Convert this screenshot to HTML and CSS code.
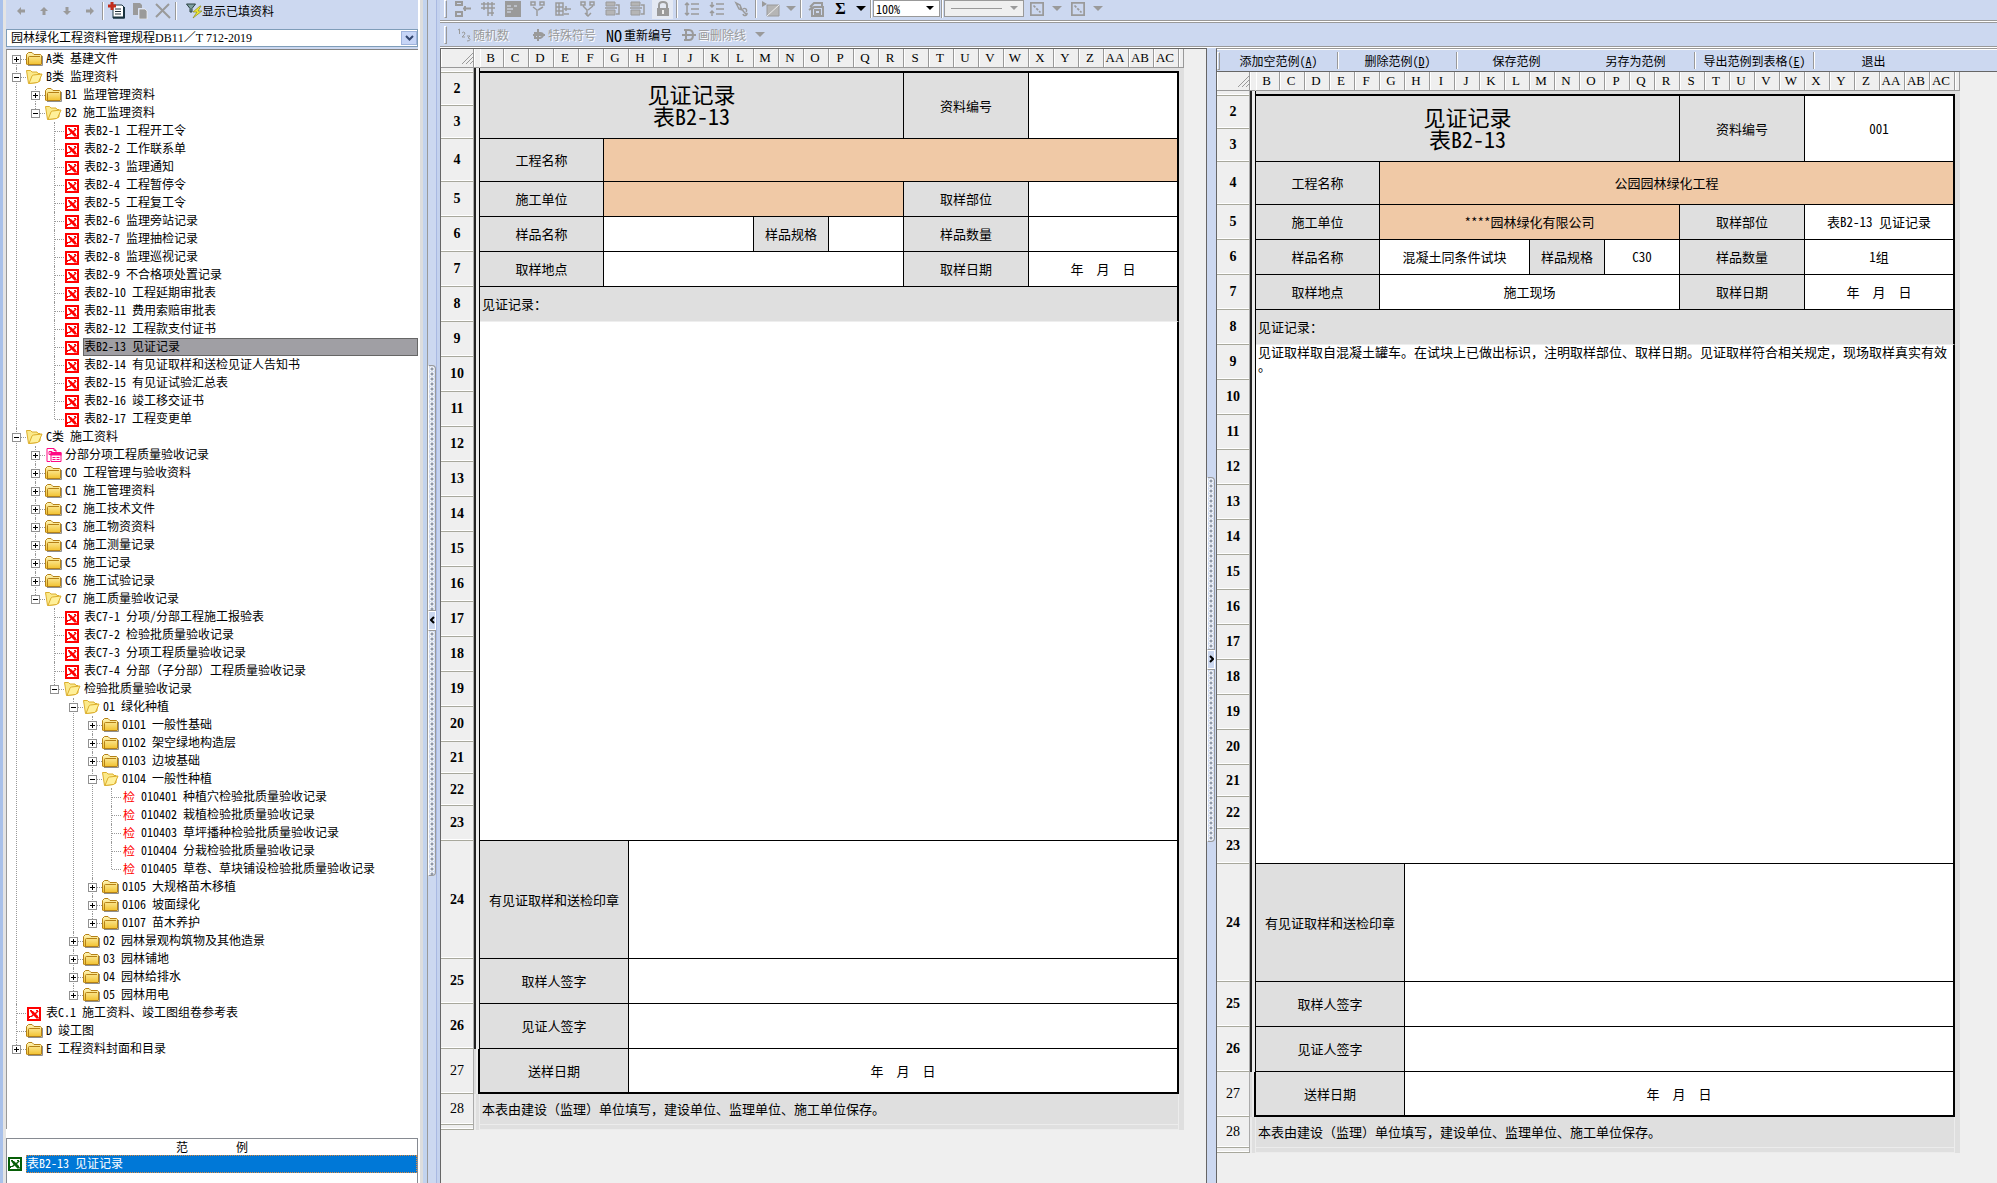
FILE: index.html
```html
<!DOCTYPE html>
<html lang="zh-CN">
<head>
<meta charset="utf-8">
<title>园林绿化工程资料管理</title>
<link rel="stylesheet" href="styles.css">
</head>
<body>
<svg class="defs" width="0" height="0" aria-hidden="true">
  <defs>
    <linearGradient id="g" x1="0" y1="0" x2="0" y2="1"><stop offset="0" stop-color="#fff6b8"/><stop offset="1" stop-color="#f2c230"/></linearGradient>
    <symbol id="fc" viewBox="0 0 17 16"><path d="M2 14.5h14.5V5" fill="none" stroke="#8f8f8f"/><path d="M.5 13V3.5L2.5 1.5H6L8 3.5h6.500l1 1V13q0 .5-.5.5H1.500q-1 0-1-.5z" fill="url(#g)" stroke="#b58116"/><path d="M2.500 13V6.500q0-1 1-1H14" fill="none" stroke="#b58116"/></symbol>
    <symbol id="fo" viewBox="0 0 17 16"><path d="M.5 1.500h4l1.500 1.500h5l1 1.500h2V12l-3 1.500-8.500 1z" fill="#fbe98a" stroke="#dcae2c"/><path d="M3 14.500l3-7.500q.5-1 1.500-1l8.500-1-3 7q-.5 1-1.500 1.500z" fill="#fff09a" stroke="#dcae2c"/></symbol>
    <symbol id="x" viewBox="0 0 14 14"><path d="M0 0h14v14H0z" fill="currentColor"/><path d="M2 2h10v10H2z" fill="#fff"/><path d="M3 4h3l2 2 2-2h2L9 7l2 2v2H9L6.500 8.500 5 10H3v1H2V9h2l1.500-1.500z" fill="currentColor"/><path d="M9 11h3v-1M3 3.500h2M9 3.500h2" stroke="currentColor" fill="none"/></symbol>
    <symbol id="bk" viewBox="0 0 16 16"><path d="M4.500 14.500h-3V1.500h7l2 2V5M8.500 1.500v2h2M3.500 4.500h3v3h-3zM5.500 5.500h10v9h-10z" fill="none" stroke="#ff0a84"/><path d="M5 5.500h11v3H5z" fill="#ff0a84"/><path d="M7 10.500h3M11 10.500h3M7 12.500h3M11 12.500h3" fill="none" stroke="#ff0a84"/></symbol>
    <symbol id="ar" viewBox="0 0 10 10"><path d="M1 5l4-4v2.500h4v3H5V9z" fill="#9a9a9a"/></symbol>
    <symbol id="dn" viewBox="0 0 10 6"><path d="M0 0h10L5 5z" fill="currentColor"/></symbol>
    <symbol id="corner" viewBox="0 0 12 12"><path d="M1 12L12 1M5 12l7-7M9 12l3-3" stroke="#999" fill="none"/></symbol>
    <symbol id="hatch" viewBox="0 0 16 16"><rect x="1" y="1" width="14" height="14" fill="none" stroke="#9a9a9a" stroke-width="2"/><path d="M4 4l8 8" stroke="#9a9a9a" stroke-width="2" stroke-dasharray="3 1.500"/></symbol>
  </defs>
</svg>
<div class="app">
  <aside class="side">
    <div class="tools">
      <button class="tb" aria-label="后退"><svg width="10" height="10"><use href="#ar"/></svg></button>
      <button class="tb" aria-label="上移"><svg class="up" width="10" height="10"><use href="#ar"/></svg></button>
      <button class="tb" aria-label="下移"><svg class="down" width="10" height="10"><use href="#ar"/></svg></button>
      <button class="tb" aria-label="前进"><svg class="right" width="10" height="10"><use href="#ar"/></svg></button>
      <i class="sep"></i>
      <button class="tb" aria-label="新建"><svg width="17" height="17" viewBox="0 0 17 17"><path d="M5 3h9l2 2v11H5z" fill="#fff" stroke="#243c48"/><path d="M5 15.500h11V5" fill="none" stroke="#18323e" stroke-width="2"/><path d="M7 7h6M7 9.500h6M7 12h6" stroke="#20303a"/><path d="M4 0v8M0 4h8" stroke="#c22c1c" stroke-width="3"/></svg></button>
      <button class="tb" aria-label="复制"><svg width="16" height="16" viewBox="0 0 16 16"><path d="M1 0h7l2 2v3H6v7H1z" fill="#9a9a9a"/><path d="M7 6h6l2 2v8H7z" fill="#9a9a9a" stroke="#fff" stroke-width=".6"/></svg></button>
      <button class="tb" aria-label="删除"><svg width="16" height="16" viewBox="0 0 16 16"><path d="M1 1l14 14M14 1L1 14" stroke="#9a9a9a" stroke-width="2"/></svg></button>
      <i class="sep"></i>
      <button class="filter"><svg width="16" height="16" viewBox="0 0 16 16"><path d="M.5 1h9L6 5.500V9H4V5.500z" fill="#7fa0a0" stroke="#2b4040"/><path d="M14 3L7 9h4l-4 6 9-7h-4l3-5z" fill="#f2ea30" stroke="#8a8a20" stroke-width=".7"/></svg>显示已填资料</button>
    </div>
    <div class="picker">
      <select aria-label="规程"><option>园林绿化工程资料管理规程DB11／T 712-2019</option></select>
      <span class="drop"><svg width="9" height="7" viewBox="0 0 9 7"><path d="M1 1l3.500 3.500L8 1" fill="none" stroke="#33466e" stroke-width="2"/></svg></span>
    </div>
    <ul class="tree">
      <li><div><button class="pm p"></button><svg class="ic"><use href="#fc"/></svg><span>A类 基建文件</span></div></li>
      <li><div><button class="pm"></button><svg class="ic"><use href="#fo"/></svg><span>B类 监理资料</span></div>
        <ul>
          <li><div><button class="pm p"></button><svg class="ic"><use href="#fc"/></svg><span>B1 监理管理资料</span></div></li>
          <li><div><button class="pm"></button><svg class="ic"><use href="#fo"/></svg><span>B2 施工监理资料</span></div>
            <ul>
              <li><div><svg class="xi"><use href="#x"/></svg><span>表B2-1 工程开工令</span></div></li>
              <li><div><svg class="xi"><use href="#x"/></svg><span>表B2-2 工作联系单</span></div></li>
              <li><div><svg class="xi"><use href="#x"/></svg><span>表B2-3 监理通知</span></div></li>
              <li><div><svg class="xi"><use href="#x"/></svg><span>表B2-4 工程暂停令</span></div></li>
              <li><div><svg class="xi"><use href="#x"/></svg><span>表B2-5 工程复工令</span></div></li>
              <li><div><svg class="xi"><use href="#x"/></svg><span>表B2-6 监理旁站记录</span></div></li>
              <li><div><svg class="xi"><use href="#x"/></svg><span>表B2-7 监理抽检记录</span></div></li>
              <li><div><svg class="xi"><use href="#x"/></svg><span>表B2-8 监理巡视记录</span></div></li>
              <li><div><svg class="xi"><use href="#x"/></svg><span>表B2-9 不合格项处置记录</span></div></li>
              <li><div><svg class="xi"><use href="#x"/></svg><span>表B2-10 工程延期审批表</span></div></li>
              <li><div><svg class="xi"><use href="#x"/></svg><span>表B2-11 费用索赔审批表</span></div></li>
              <li><div><svg class="xi"><use href="#x"/></svg><span>表B2-12 工程款支付证书</span></div></li>
              <li><div><svg class="xi"><use href="#x"/></svg><span class="sel">表B2-13 见证记录</span></div></li>
              <li><div><svg class="xi"><use href="#x"/></svg><span>表B2-14 有见证取样和送检见证人告知书</span></div></li>
              <li><div><svg class="xi"><use href="#x"/></svg><span>表B2-15 有见证试验汇总表</span></div></li>
              <li><div><svg class="xi"><use href="#x"/></svg><span>表B2-16 竣工移交证书</span></div></li>
              <li><div><svg class="xi"><use href="#x"/></svg><span>表B2-17 工程变更单</span></div></li>
            </ul></li>
        </ul></li>
      <li><div><button class="pm"></button><svg class="ic"><use href="#fo"/></svg><span>C类 施工资料</span></div>
        <ul>
          <li><div><button class="pm p"></button><svg class="ic"><use href="#bk"/></svg><span>分部分项工程质量验收记录</span></div></li>
          <li><div><button class="pm p"></button><svg class="ic"><use href="#fc"/></svg><span>C0 工程管理与验收资料</span></div></li>
          <li><div><button class="pm p"></button><svg class="ic"><use href="#fc"/></svg><span>C1 施工管理资料</span></div></li>
          <li><div><button class="pm p"></button><svg class="ic"><use href="#fc"/></svg><span>C2 施工技术文件</span></div></li>
          <li><div><button class="pm p"></button><svg class="ic"><use href="#fc"/></svg><span>C3 施工物资资料</span></div></li>
          <li><div><button class="pm p"></button><svg class="ic"><use href="#fc"/></svg><span>C4 施工测量记录</span></div></li>
          <li><div><button class="pm p"></button><svg class="ic"><use href="#fc"/></svg><span>C5 施工记录</span></div></li>
          <li><div><button class="pm p"></button><svg class="ic"><use href="#fc"/></svg><span>C6 施工试验记录</span></div></li>
          <li><div><button class="pm"></button><svg class="ic"><use href="#fo"/></svg><span>C7 施工质量验收记录</span></div>
            <ul>
              <li><div><svg class="xi"><use href="#x"/></svg><span>表C7-1 分项/分部工程施工报验表</span></div></li>
              <li><div><svg class="xi"><use href="#x"/></svg><span>表C7-2 检验批质量验收记录</span></div></li>
              <li><div><svg class="xi"><use href="#x"/></svg><span>表C7-3 分项工程质量验收记录</span></div></li>
              <li><div><svg class="xi"><use href="#x"/></svg><span>表C7-4 <b class="fw">分部（子分部）工程质量验收记录</b></span></div></li>
              <li><div><button class="pm"></button><svg class="ic"><use href="#fo"/></svg><span>检验批质量验收记录</span></div>
                <ul>
                  <li><div><button class="pm"></button><svg class="ic"><use href="#fo"/></svg><span>01 绿化种植</span></div>
                    <ul>
                      <li><div><button class="pm p"></button><svg class="ic"><use href="#fc"/></svg><span>0101 一般性基础</span></div></li>
                      <li><div><button class="pm p"></button><svg class="ic"><use href="#fc"/></svg><span>0102 架空绿地构造层</span></div></li>
                      <li><div><button class="pm p"></button><svg class="ic"><use href="#fc"/></svg><span>0103 边坡基础</span></div></li>
                      <li><div><button class="pm"></button><svg class="ic"><use href="#fo"/></svg><span>0104 一般性种植</span></div>
                        <ul>
                          <li><div><b class="jian">检</b><span>010401 种植穴检验批质量验收记录</span></div></li>
                          <li><div><b class="jian">检</b><span>010402 栽植检验批质量验收记录</span></div></li>
                          <li><div><b class="jian">检</b><span>010403 草坪播种检验批质量验收记录</span></div></li>
                          <li><div><b class="jian">检</b><span>010404 分栽检验批质量验收记录</span></div></li>
                          <li><div><b class="jian">检</b><span>010405 草卷、草块铺设检验批质量验收记录</span></div></li>
                        </ul></li>
                      <li><div><button class="pm p"></button><svg class="ic"><use href="#fc"/></svg><span>0105 大规格苗木移植</span></div></li>
                      <li><div><button class="pm p"></button><svg class="ic"><use href="#fc"/></svg><span>0106 坡面绿化</span></div></li>
                      <li><div><button class="pm p"></button><svg class="ic"><use href="#fc"/></svg><span>0107 苗木养护</span></div></li>
                    </ul></li>
                  <li><div><button class="pm p"></button><svg class="ic"><use href="#fc"/></svg><span>02 园林景观构筑物及其他造景</span></div></li>
                  <li><div><button class="pm p"></button><svg class="ic"><use href="#fc"/></svg><span>03 园林铺地</span></div></li>
                  <li><div><button class="pm p"></button><svg class="ic"><use href="#fc"/></svg><span>04 园林给排水</span></div></li>
                  <li><div><button class="pm p"></button><svg class="ic"><use href="#fc"/></svg><span>05 园林用电</span></div></li>
                </ul></li>
            </ul></li>
        </ul></li>
      <li><div><svg class="xi"><use href="#x"/></svg><span>表C.1 施工资料、竣工图组卷参考表</span></div></li>
      <li><div><svg class="ic"><use href="#fc"/></svg><span>D 竣工图</span></div></li>
      <li><div><button class="pm p"></button><svg class="ic"><use href="#fc"/></svg><span>E 工程资料封面和目录</span></div></li>
    </ul>
    <section class="samples">
      <h2><span>范</span><span>例</span></h2>
      <div class="sample"><svg class="xi"><use href="#x"/></svg><span>表B2-13 见证记录</span></div>
    </section>
  </aside>
  <div class="split split-main"><i class="grip"></i><button class="fold" aria-label="收起"><svg width="5" height="8" viewBox="0 0 5 8"><path d="M4 1L1 4l3 3" fill="none" stroke="#000" stroke-width="2"/></svg></button><i class="grip"></i></div>
  <main class="work">
    <div class="bar bar1">
      <i class="handle"></i>
      <button class="tb" aria-label="插入行"><svg width="16" height="16" viewBox="0 0 16 16"><path d="M1 1h6v3H1zM1 11h6v4H1z M8 7.500h8M10 5v5" fill="none" stroke="#9a9a9a" stroke-width="2"/></svg></button>
      <button class="tb" aria-label="插入列"><svg width="16" height="16" viewBox="0 0 16 16"><path d="M1 3h14M1 7h14M4 1v8M8 1v14M12 1v14M8 12h6" stroke="#9a9a9a" stroke-width="1.500"/></svg></button>
      <button class="tb" aria-label="属性"><svg width="16" height="16" viewBox="0 0 16 16"><path d="M0 0h16v16H0z" fill="#9a9a9a"/><path d="M2 5h4M2 8h6M2 11h4M9 5h3" stroke="#dde5f5"/></svg></button>
      <button class="tb" aria-label="拆分"><svg width="16" height="16" viewBox="0 0 16 16"><path d="M1 1h4v3H1zM10 1h4v3h-4zM3 6l4 3v6M13 6L8 9" fill="none" stroke="#9a9a9a" stroke-width="1.500"/></svg></button>
      <button class="tb" aria-label="删除行"><svg width="16" height="16" viewBox="0 0 16 16"><path d="M1 2h7v12H1zM1 6h7M1 10h7M4 2v12M9 8h7M11 5v5M9 13h5" fill="none" stroke="#9a9a9a" stroke-width="1.500"/></svg></button>
      <button class="tb" aria-label="合并"><svg width="16" height="16" viewBox="0 0 16 16"><path d="M1 1h4v3H1zM10 1h4v3h-4zM3 5l4 4v6M13 5L8 9M5 12l3 3 3-3" fill="none" stroke="#9a9a9a" stroke-width="1.500"/></svg></button>
      <button class="tb" aria-label="上方插入"><svg width="16" height="16" viewBox="0 0 16 16"><path d="M1 1h9v4H1zM1 9h9v5H1z" fill="#b5b5b5" stroke="#9a9a9a"/><path d="M11 4h3v9h-3M0 7h12" fill="none" stroke="#9a9a9a" stroke-width="1.500"/></svg></button>
      <button class="tb" aria-label="下方插入"><svg width="16" height="16" viewBox="0 0 16 16"><path d="M1 1h9v4H1zM1 9h9v5H1z" fill="#b5b5b5" stroke="#9a9a9a"/><path d="M11 4h3v9h-3M0 7h12" fill="none" stroke="#9a9a9a" stroke-width="1.500"/></svg></button>
      <button class="tb lock" aria-label="锁定"><svg width="14" height="16" viewBox="0 0 14 16"><path d="M3 7V4q0-3 4-3t4 3v3" fill="none" stroke="#9a9a9a" stroke-width="2"/><path d="M1 7h12v8H1z" fill="#9a9a9a"/><path d="M6 9h2v4H6z" fill="#eee"/></svg></button>
      <i class="sep"></i>
      <button class="tb" aria-label="增加行距"><svg width="16" height="16" viewBox="0 0 16 16"><path d="M3 2v12M1 4l2-2 2 2M1 12l2 2 2-2M7 3h8M7 8h8M7 13h8" fill="none" stroke="#9a9a9a" stroke-width="1.500"/></svg></button>
      <button class="tb" aria-label="减少行距"><svg width="16" height="16" viewBox="0 0 16 16"><path d="M3 1v5M3 10v5M1 4l2 2 2-2M1 12l2-2 2 2M7 3h8M7 8h8M7 13h8" fill="none" stroke="#9a9a9a" stroke-width="1.500"/></svg></button>
      <button class="tb" aria-label="链接"><svg width="16" height="16" viewBox="0 0 16 16"><path d="M2 2l4 2 2 5-3-1zM6 6l4 5 3 3M9 8a2 2 0 1 1 3 3M9 13a2 2 0 1 0 4-1" fill="none" stroke="#9a9a9a" stroke-width="1.500"/></svg></button>
      <i class="sep"></i>
      <button class="tb" aria-label="图片"><svg width="18" height="16" viewBox="0 0 18 16"><path d="M0 0l5 3-5 3z" fill="#9a9a9a"/><path d="M5 4h12v11H5z" fill="#b5b5b5" stroke="#9a9a9a"/><path d="M5 15L17 4" stroke="#eee"/></svg></button>
      <button class="da off" aria-label="图片选项"><svg width="10" height="6"><use href="#dn"/></svg></button>
      <i class="sep"></i>
      <button class="tb" aria-label="对象"><svg width="16" height="16" viewBox="0 0 16 16"><path d="M2 6l4-4h8v3M6 6h9v9H4V8zM7 9h5v4H7zM1 9l4-3" fill="none" stroke="#9a9a9a" stroke-width="2"/></svg></button>
      <button class="tb sum">Σ</button>
      <button class="da" aria-label="函数"><svg width="10" height="6"><use href="#dn"/></svg></button>
      <i class="sep"></i>
      <span class="combo zoom"><select aria-label="缩放"><option>100%</option></select><svg width="8" height="5"><use href="#dn"/></svg></span>
      <i class="sep"></i>
      <span class="combo line off"><i></i><svg width="8" height="5"><use href="#dn"/></svg></span>
      <button class="tb" aria-label="边框"><svg width="14" height="14"><use href="#hatch"/></svg></button>
      <button class="da off" aria-label="边框选项"><svg width="10" height="6"><use href="#dn"/></svg></button>
      <button class="tb" aria-label="斜线"><svg width="14" height="14"><use href="#hatch"/></svg></button>
      <button class="da off" aria-label="斜线选项"><svg width="10" height="6"><use href="#dn"/></svg></button>
    </div>
    <div class="bar bar2">
      <i class="handle"></i>
      <button class="cmd off" disabled><svg width="14" height="14" viewBox="0 0 14 14"><path d="M1 2l1.500-1v5M5 5q2-2 3 0 0 1.500-3 4h3M10 8h3l-2 2q2 0 2 1.500t-3 1.500" fill="none" stroke="#9a9a9a"/></svg>随机数</button>
      <button class="cmd off" disabled><svg width="14" height="14" viewBox="0 0 14 14"><path d="M1 7h12M6 1v12M3 5h5q3 0 3 2t-3 3H3z" fill="none" stroke="#9a9a9a" stroke-width="2"/></svg>特殊符号</button>
      <button class="cmd"><span class="no">NO</span>重新编号</button>
      <button class="cmd off" disabled><svg width="14" height="14" viewBox="0 0 14 14"><path d="M0 7h14M4 2v10M2 2h5q4 0 4 5t-4 5H2" fill="none" stroke="#9a9a9a" stroke-width="2"/></svg>画删除线<svg class="tail" width="10" height="6"><use href="#dn"/></svg></button>
    </div>
    <div class="panes">
      <section class="pane">
        <table class="sheet">
          <colgroup><col class="cr"><col class="ca"><col class="cb"><col span="27" class="cc"><col class="ce"></colgroup>
          <tr class="cols"><th class="cnr"><svg width="12" height="12"><use href="#corner"/></svg></th><th></th><th>B</th><th>C</th><th>D</th><th>E</th><th>F</th><th>G</th><th>H</th><th>I</th><th>J</th><th>K</th><th>L</th><th>M</th><th>N</th><th>O</th><th>P</th><th>Q</th><th>R</th><th>S</th><th>T</th><th>U</th><th>V</th><th>W</th><th>X</th><th>Y</th><th>Z</th><th>AA</th><th>AB</th><th>AC</th><th></th></tr>
          <tr class="stub"><th></th><td class="a"></td><td colspan="28" class="topline"></td><td class="e"></td></tr>
          <tr class="h33"><th>2</th><td class="a"></td><td colspan="17" rowspan="2" class="l title">见证记录<br>表B2-13</td><td colspan="5" rowspan="2" class="l">资料编号</td><td colspan="6" rowspan="2" class="z"></td><td class="e"></td></tr>
          <tr class="h33"><th>3</th><td class="a"></td><td class="e"></td></tr>
          <tr class="h43"><th>4</th><td class="a"></td><td colspan="5" class="l">工程名称</td><td colspan="23" class="o z"></td><td class="e"></td></tr>
          <tr class="h35"><th>5</th><td class="a"></td><td colspan="5" class="l">施工单位</td><td colspan="12" class="o"></td><td colspan="5" class="l">取样部位</td><td colspan="6" class="z"></td><td class="e"></td></tr>
          <tr class="h35"><th>6</th><td class="a"></td><td colspan="5" class="l">样品名称</td><td colspan="6"></td><td colspan="3" class="l">样品规格</td><td colspan="3"></td><td colspan="5" class="l">样品数量</td><td colspan="6" class="z"></td><td class="e"></td></tr>
          <tr class="h35"><th>7</th><td class="a"></td><td colspan="5" class="l">取样地点</td><td colspan="12"></td><td colspan="5" class="l">取样日期</td><td colspan="6" class="z">年  月  日</td><td class="e"></td></tr>
          <tr class="h35"><th>8</th><td class="a"></td><td colspan="28" class="l z left soft">见证记录：</td><td class="e"></td></tr>
          <tr class="h35"><th>9</th><td class="a"></td><td colspan="28" rowspan="15" class="z note"></td><td class="e"></td></tr>
          <tr class="h35"><th>10</th><td class="a"></td><td class="e"></td></tr>
          <tr class="h35"><th>11</th><td class="a"></td><td class="e"></td></tr>
          <tr class="h35"><th>12</th><td class="a"></td><td class="e"></td></tr>
          <tr class="h35"><th>13</th><td class="a"></td><td class="e"></td></tr>
          <tr class="h35"><th>14</th><td class="a"></td><td class="e"></td></tr>
          <tr class="h35"><th>15</th><td class="a"></td><td class="e"></td></tr>
          <tr class="h35"><th>16</th><td class="a"></td><td class="e"></td></tr>
          <tr class="h35"><th>17</th><td class="a"></td><td class="e"></td></tr>
          <tr class="h35"><th>18</th><td class="a"></td><td class="e"></td></tr>
          <tr class="h35"><th>19</th><td class="a"></td><td class="e"></td></tr>
          <tr class="h35"><th>20</th><td class="a"></td><td class="e"></td></tr>
          <tr class="h32"><th>21</th><td class="a"></td><td class="e"></td></tr>
          <tr class="h32"><th>22</th><td class="a"></td><td class="e"></td></tr>
          <tr class="h35"><th>23</th><td class="a"></td><td class="e"></td></tr>
          <tr class="h118"><th>24</th><td class="a"></td><td colspan="6" class="l">有见证取样和送检印章</td><td colspan="22" class="z"></td><td class="e"></td></tr>
          <tr class="h45"><th>25</th><td class="a"></td><td colspan="6" class="l">取样人签字</td><td colspan="22" class="z"></td><td class="e"></td></tr>
          <tr class="h45"><th>26</th><td class="a"></td><td colspan="6" class="l">见证人签字</td><td colspan="22" class="z"></td><td class="e"></td></tr>
          <tr class="h45 last"><th>27</th><td class="a"></td><td colspan="6" class="l">送样日期</td><td colspan="22" class="z">年  月  日</td><td class="e"></td></tr>
          <tr class="h31 foot"><th>28</th><td class="a"></td><td colspan="28" class="left fw">本表由建设（监理）单位填写，建设单位、监理单位、施工单位保存。</td><td class="e"></td></tr>
          <tr class="stub foot"><th></th><td class="a"></td><td colspan="28"></td><td class="e"></td></tr>
        </table>
      </section>
      <div class="split split-sub"><i class="grip"></i><button class="fold" aria-label="展开"><svg width="5" height="8" viewBox="0 0 5 8"><path d="M1 1l3 3-3 3" fill="none" stroke="#000" stroke-width="2"/></svg></button><i class="grip"></i></div>
      <section class="pane right-pane">
        <div class="menu">
          <i class="handle"></i>
          <button>添加空范例(<u>A</u>)</button><button>删除范例(<u>D</u>)</button><button class="bare">保存范例</button><button>另存为范例</button><button>导出范例到表格(<u>E</u>)</button><button class="bare">退出</button>
        </div>
        <table class="sheet">
          <colgroup><col class="cr"><col class="ca"><col class="cb"><col span="27" class="cc"><col class="ce"></colgroup>
          <tr class="cols"><th class="cnr"><svg width="12" height="12"><use href="#corner"/></svg></th><th></th><th>B</th><th>C</th><th>D</th><th>E</th><th>F</th><th>G</th><th>H</th><th>I</th><th>J</th><th>K</th><th>L</th><th>M</th><th>N</th><th>O</th><th>P</th><th>Q</th><th>R</th><th>S</th><th>T</th><th>U</th><th>V</th><th>W</th><th>X</th><th>Y</th><th>Z</th><th>AA</th><th>AB</th><th>AC</th><th></th></tr>
          <tr class="stub"><th></th><td class="a"></td><td colspan="28" class="topline"></td><td class="e"></td></tr>
          <tr class="h33"><th>2</th><td class="a"></td><td colspan="17" rowspan="2" class="l title">见证记录<br>表B2-13</td><td colspan="5" rowspan="2" class="l">资料编号</td><td colspan="6" rowspan="2" class="z">001</td><td class="e"></td></tr>
          <tr class="h33"><th>3</th><td class="a"></td><td class="e"></td></tr>
          <tr class="h43"><th>4</th><td class="a"></td><td colspan="5" class="l">工程名称</td><td colspan="23" class="o z">公园园林绿化工程</td><td class="e"></td></tr>
          <tr class="h35"><th>5</th><td class="a"></td><td colspan="5" class="l">施工单位</td><td colspan="12" class="o">****园林绿化有限公司</td><td colspan="5" class="l">取样部位</td><td colspan="6" class="z">表B2-13 见证记录</td><td class="e"></td></tr>
          <tr class="h35"><th>6</th><td class="a"></td><td colspan="5" class="l">样品名称</td><td colspan="6">混凝土同条件试块</td><td colspan="3" class="l">样品规格</td><td colspan="3">C30</td><td colspan="5" class="l">样品数量</td><td colspan="6" class="z">1组</td><td class="e"></td></tr>
          <tr class="h35"><th>7</th><td class="a"></td><td colspan="5" class="l">取样地点</td><td colspan="12">施工现场</td><td colspan="5" class="l">取样日期</td><td colspan="6" class="z">年  月  日</td><td class="e"></td></tr>
          <tr class="h35"><th>8</th><td class="a"></td><td colspan="28" class="l z left soft">见证记录：</td><td class="e"></td></tr>
          <tr class="h35"><th>9</th><td class="a"></td><td colspan="28" rowspan="15" class="z note fw">见证取样取自混凝土罐车。在试块上已做出标识，注明取样部位、取样日期。见证取样符合相关规定，现场取样真实有效<br>。</td><td class="e"></td></tr>
          <tr class="h35"><th>10</th><td class="a"></td><td class="e"></td></tr>
          <tr class="h35"><th>11</th><td class="a"></td><td class="e"></td></tr>
          <tr class="h35"><th>12</th><td class="a"></td><td class="e"></td></tr>
          <tr class="h35"><th>13</th><td class="a"></td><td class="e"></td></tr>
          <tr class="h35"><th>14</th><td class="a"></td><td class="e"></td></tr>
          <tr class="h35"><th>15</th><td class="a"></td><td class="e"></td></tr>
          <tr class="h35"><th>16</th><td class="a"></td><td class="e"></td></tr>
          <tr class="h35"><th>17</th><td class="a"></td><td class="e"></td></tr>
          <tr class="h35"><th>18</th><td class="a"></td><td class="e"></td></tr>
          <tr class="h35"><th>19</th><td class="a"></td><td class="e"></td></tr>
          <tr class="h35"><th>20</th><td class="a"></td><td class="e"></td></tr>
          <tr class="h32"><th>21</th><td class="a"></td><td class="e"></td></tr>
          <tr class="h32"><th>22</th><td class="a"></td><td class="e"></td></tr>
          <tr class="h35"><th>23</th><td class="a"></td><td class="e"></td></tr>
          <tr class="h118"><th>24</th><td class="a"></td><td colspan="6" class="l">有见证取样和送检印章</td><td colspan="22" class="z"></td><td class="e"></td></tr>
          <tr class="h45"><th>25</th><td class="a"></td><td colspan="6" class="l">取样人签字</td><td colspan="22" class="z"></td><td class="e"></td></tr>
          <tr class="h45"><th>26</th><td class="a"></td><td colspan="6" class="l">见证人签字</td><td colspan="22" class="z"></td><td class="e"></td></tr>
          <tr class="h45 last"><th>27</th><td class="a"></td><td colspan="6" class="l">送样日期</td><td colspan="22" class="z">年  月  日</td><td class="e"></td></tr>
          <tr class="h31 foot"><th>28</th><td class="a"></td><td colspan="28" class="left fw">本表由建设（监理）单位填写，建设单位、监理单位、施工单位保存。</td><td class="e"></td></tr>
          <tr class="stub foot"><th></th><td class="a"></td><td colspan="28"></td><td class="e"></td></tr>
        </table>
      </section>
    </div>
  </main>
</div>
</body>
</html>
```

FILE: styles.css
```css
:root {
  --bar: #ccd8f0;
  --grey: #9c9c9c;
  --head: #efefef;
  --label: #dfdfdf;
  --peach: #f0c9a6;
}
* { box-sizing: border-box; }
body {
  margin: 0;
  background: var(--bar);
  color: #000;
  font: 12px/18px "Noto Sans CJK SC", sans-serif;
  font-feature-settings: "hwid";
  font-kerning: none;
}
button, select {
  margin: 0;
  padding: 0;
  border: 0;
  background: none;
  color: inherit;
  font: inherit;
  font-feature-settings: inherit;
  appearance: none;
}
svg { display: block; flex: none; }
.defs { position: absolute; }
.app {
  display: grid;
  grid-template-columns: 427px 13px minmax(0, 1fr);
  min-height: 100vh;
}
/* full-width punctuation keeps its em-wide box */
.fw { font-weight: 400; font-feature-settings: normal; }

/* left panel */
.side {
  display: flex;
  flex-direction: column;
  padding: 0 5px 0 3px;
  border-left: 3px solid #a9c1ea;
  border-right: 4px solid #c2d3ee;
  background: linear-gradient(90deg, #e4e4e4 3px, #fff 3px, #fff calc(100% - 3px), #ddd calc(100% - 3px));
}
.tools {
  display: flex;
  align-items: center;
  height: 29px;
  padding: 0 0 8px 3px;
  background: var(--bar);
}
.tb {
  display: flex;
  flex: none;
  align-items: center;
  justify-content: center;
  width: 23px;
  height: 20px;
}
.up { transform: rotate(90deg); }
.down { transform: rotate(-90deg); }
.right { transform: rotate(180deg); }
.sep {
  flex: none;
  width: 2px;
  height: 18px;
  margin: 0 1px;
  background: linear-gradient(90deg, #999 50%, #fff 50%);
}
.filter {
  display: flex;
  align-items: center;
  margin-left: 8px;
}
.picker {
  position: relative;
  height: 18px;
  margin-bottom: 2px;
  border: 1px solid #7f9db9;
  background: #fff;
}
.picker select {
  display: block;
  width: 100%;
  height: 16px;
  padding-left: 4px;
  font-family: "Liberation Serif", "Noto Sans CJK SC", serif;
  font-feature-settings: normal;
  line-height: 16px;
}
.drop {
  position: absolute;
  top: 1px;
  right: 0;
  display: flex;
  align-items: center;
  justify-content: center;
  width: 16px;
  height: 14px;
  border: 1px solid #9fb4dc;
  background: #c6d5f7;
  pointer-events: none;
}
.tree {
  flex: 1;
  margin: 0 0 9px;
  padding: 0 0 0 1px;
  border-top: 1px solid #848484;
  border-left: 1px solid #999;
  background: #fff;
  list-style: none;
  box-shadow: 0 -2px 0 var(--bar);
}
.tree ul { margin: 0; padding: 0 0 0 19px; list-style: none; }
.tree li { position: relative; }
.tree li::before {
  content: "";
  position: absolute;
  top: 0;
  bottom: 0;
  left: 8px;
  border-left: 1px dotted #999;
}
.tree li:last-child::before { bottom: auto; height: 9px; }
.tree > li:first-child::before { top: 9px; }
.tree div {
  position: relative;
  display: flex;
  align-items: center;
  height: 18px;
  padding-left: 18px;
  line-height: 16px;
  white-space: nowrap;
}
.tree div::before {
  content: "";
  position: absolute;
  top: 9px;
  left: 9px;
  width: 9px;
  border-top: 1px dotted #999;
}
.pm {
  position: absolute;
  z-index: 1;
  left: 4px;
  top: 5px;
  width: 9px;
  height: 9px;
  border: 1px solid #919191;
  background: linear-gradient(#000, #000) center / 5px 1px no-repeat #fff;
}
.pm.p {
  background: linear-gradient(#000, #000) center / 5px 1px no-repeat, linear-gradient(#000, #000) center / 1px 5px no-repeat, #fff;
}
.ic { width: 17px; height: 16px; margin-right: 3px; }
.xi { width: 14px; height: 14px; margin: 1px 5px 0 1px; color: #f00; }
.jian { width: 20px; padding-left: 2px; color: #f00; font-weight: 400; font-family: "Noto Sans CJK SC", serif; }
.tree span { height: 18px; }
.tree .sel {
  flex: 1;
  margin-left: -1px;
  border: 1px solid #666;
  background: #a09fa4;
  line-height: 14px;
}
.samples {
  height: 45px;
  border: 1px solid #868a91;
  border-bottom: 0;
  background: #fff;
}
.samples h2 {
  display: flex;
  justify-content: center;
  gap: 48px;
  margin: 0;
  height: 16px;
  font: inherit;
  line-height: 16px;
}
.sample { display: flex; align-items: center; height: 18px; }
.sample .xi { margin: 0 4px 0 1px; color: #075e07; }
.sample span {
  flex: 1;
  height: 18px;
  padding-left: 1px;
  outline: 1px dotted #e08a3c;
  outline-offset: -1px;
  background: #0078d7;
  color: #fff;
  line-height: 16px;
}

/* splitters */
.split {
  display: flex;
  flex-direction: column;
  align-items: flex-start;
  justify-content: center;
  background: var(--bar);
}
.split-main {
  padding-top: 57px;
  border-left: 1px solid #999;
  background: linear-gradient(90deg, var(--bar) 8px, #a9b9e2 8px, #a9b9e2 9px, #c4d2ee 9px);
}
.split-sub { flex: none; width: 9px; padding-top: 87px; }
.grip {
  width: 8px;
  height: 246px;
  border: 1px solid #999;
  border-left-color: #fff;
  background: radial-gradient(circle at 3px 3px, #8f98a8 1px, #fff 2px, var(--bar) 3px) 0 0 / 6px 5px;
}
.split-sub .grip { height: 173px; }
.grip:first-child { border-radius: 0 4px 0 0; }
.grip:last-child { border-radius: 0 0 4px 0; }
.fold {
  display: flex;
  align-items: center;
  justify-content: center;
  width: 8px;
  height: 19px;
  border: 1px solid #fff;
}

/* toolbars */
.work { display: flex; flex-direction: column; min-width: 0; }
.bar {
  display: flex;
  align-items: center;
  padding-left: 4px;
  background: var(--bar);
  overflow: hidden;
}
.bar1 { height: 23px; padding-bottom: 5px; border-bottom: 1px solid #999; box-shadow: inset 0 -1px #fff, inset 0 -2px #999; }
.bar2 { height: 25px; border-bottom: 1px solid #fff; box-shadow: inset 0 -1px #999; }
.handle {
  flex: none;
  width: 3px;
  height: 18px;
  border: 1px solid #999;
  border-top-color: #fff;
  border-left-color: #fff;
}
.bar1 .handle { margin-right: 3px; }
.bar .tb { width: 25px; }
.bar .lock { width: 21px; margin: 0 2px; background: #e4e9f3; }
.bar .sum { font-size: 16px; font-weight: 700; font-family: "Liberation Serif", serif; }
.da { display: flex; flex: none; justify-content: center; width: 16px; }
.off { color: #9a9a9a; }
.combo {
  display: flex;
  flex: none;
  align-items: center;
  height: 17px;
  padding: 0 5px 0 2px;
  border: 1px solid #999;
  background: #fff;
}
.zoom { width: 67px; }
.zoom select { flex: 1; line-height: 14px; }
.line { width: 80px; background: var(--head); }
.line i { flex: 1; height: 1px; margin: 0 8px 0 4px; background: #999; }
.cmd { display: flex; align-items: center; gap: 2px; margin-left: 10px; }
.cmd + .cmd { margin-left: 23px; }
.cmd + .cmd:nth-of-type(n + 3) { margin-left: 10px; }
.cmd.off { text-shadow: 1px 1px #fff; }
.tail { margin-left: 7px; }
.no { font-size: 16px; }

/* sheets */
.panes { display: flex; flex: 1; min-height: 0; }
.pane {
  flex: none;
  width: 767px;
  border: 1px solid #666;
  border-bottom: 0;
  background: var(--head);
}
.right-pane { flex: 1; width: auto; min-width: 0; border-right: 0; border-top-color: #999; overflow: hidden; }
.menu {
  display: flex;
  align-items: center;
  height: 23px;
  border-top: 1px solid #fff;
  border-bottom: 1px solid #666;
  background: var(--bar);
}
.menu button {
  flex: none;
  width: 118px;
  height: 17px;
  margin-right: 1px;
  line-height: 17px;
  border-right: 1px solid #999;
  box-shadow: 1px 0 #fff;
}
.menu .bare { border-color: transparent; box-shadow: none; }
.sheet {
  width: 743px;
  table-layout: fixed;
  border-collapse: separate;
  border-spacing: 0;
  font-size: 13px;
  line-height: 14px;
  white-space: pre;
}
.cr { width: 33px; }
.ca { width: 6px; }
.cb { width: 24px; }
.cc { width: 25px; }
.ce { width: 5px; }
.sheet td, .sheet th { padding: 0; text-align: center; vertical-align: middle; }
.sheet td {
  border-right: 1px solid #000;
  border-bottom: 1px solid #000;
  background: #fff;
}
.sheet th {
  border-right: 1px solid #aaa;
  border-bottom: 1px solid #a8a89c;
  background: var(--head);
  box-shadow: inset 0 -1px #fff;
  font: 700 14px/14px "Liberation Serif", serif;
}
.cols { height: 19px; }
.sheet .cols th {
  padding-right: 2px;
  border-color: #999;
  box-shadow: inset 1px 0 #fff;
  font-weight: 400;
  font-size: 13px;
}
.sheet .cols th:nth-child(2) { border-right-color: transparent; }
.cols .cnr svg { margin-left: 20px; }
.stub { height: 5px; line-height: 0; }
.stub th { font-size: 0; line-height: 0; }
.h31 { height: 31px; }
.h32 { height: 32px; }
.h33 { height: 33px; }
.h35 { height: 35px; }
.h43 { height: 43px; }
.h45 { height: 45px; }
.h118 { height: 118px; }
.sheet .a {
  border-left: 2px solid #222;
  border-bottom: 0;
  background: #ececec;
}
.sheet .e { border: 0; background: var(--label); }
.sheet .l { background: var(--label); }
.sheet .o { background: var(--peach); }
.sheet .z { border-right-width: 2px; }
.sheet .topline { border-right: 0; border-bottom-width: 2px; background: var(--label); }
.sheet .left { padding-left: 2px; text-align: left; }
.sheet .soft { border-bottom-color: #eee; }
.sheet .title { padding-bottom: 4px; font-size: 22px; line-height: 22px; }
.sheet .note { padding-left: 2px; text-align: left; vertical-align: top; }
.last td { border-bottom-width: 2px; }
.last th, .foot th { font-weight: 400; }
.sheet .last .a { border-left-color: #ddd; border-right-width: 2px; }
.sheet .foot td { border-color: #ececec; background: var(--label); }
```
